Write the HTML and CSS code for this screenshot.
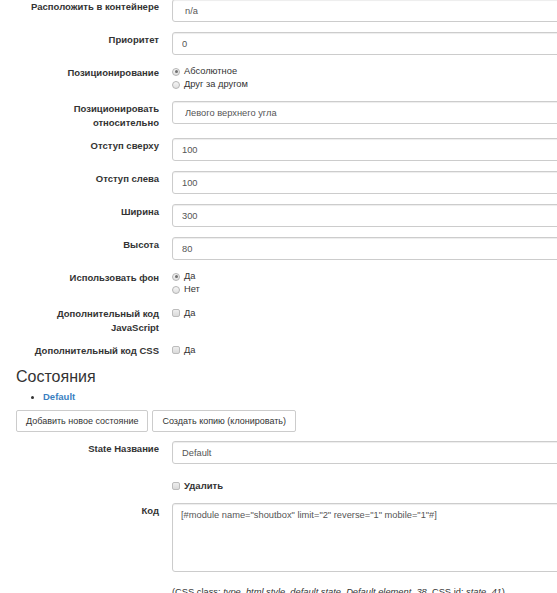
FILE: index.html
```html
<!DOCTYPE html>
<html lang="ru">
<head>
<meta charset="utf-8">
<title>Настройки элемента</title>
<link rel="stylesheet" href="styles.css">
</head>
<body>
<div class="page">
  <div class="form form-top">
    <div class="row">
      <div class="lbl">Расположить в контейнере</div>
      <div class="ctl"><input class="inp sel" type="text" value="n/a" readonly></div>
    </div>
    <div class="row">
      <div class="lbl">Приоритет</div>
      <div class="ctl"><input class="inp" type="text" value="0" readonly></div>
    </div>
    <div class="row">
      <div class="lbl">Позиционирование</div>
      <div class="ctl opts">
        <div class="opt"><span class="radio on"></span><span>Абсолютное</span></div>
        <div class="opt"><span class="radio"></span><span>Друг за другом</span></div>
      </div>
    </div>
    <div class="row">
      <div class="lbl">Позиционировать относительно</div>
      <div class="ctl"><input class="inp sel" type="text" value="Левого верхнего угла" readonly></div>
    </div>
    <div class="row">
      <div class="lbl">Отступ сверху</div>
      <div class="ctl"><input class="inp" type="text" value="100" readonly></div>
    </div>
    <div class="row">
      <div class="lbl">Отступ слева</div>
      <div class="ctl"><input class="inp" type="text" value="100" readonly></div>
    </div>
    <div class="row">
      <div class="lbl">Ширина</div>
      <div class="ctl"><input class="inp" type="text" value="300" readonly></div>
    </div>
    <div class="row">
      <div class="lbl">Высота</div>
      <div class="ctl"><input class="inp" type="text" value="80" readonly></div>
    </div>
    <div class="row">
      <div class="lbl">Использовать фон</div>
      <div class="ctl opts">
        <div class="opt"><span class="radio on"></span><span>Да</span></div>
        <div class="opt"><span class="radio"></span><span>Нет</span></div>
      </div>
    </div>
    <div class="row">
      <div class="lbl">Дополнительный код JavaScript</div>
      <div class="ctl checks">
        <div class="opt"><span class="check"></span><span>Да</span></div>
      </div>
    </div>
    <div class="row">
      <div class="lbl">Дополнительный код CSS</div>
      <div class="ctl checks">
        <div class="opt"><span class="check"></span><span>Да</span></div>
      </div>
    </div>
  </div>

  <h2 class="title">Состояния</h2>
  <ul class="states">
    <li><a class="state-link" href="#">Default</a></li>
  </ul>
  <div class="btns">
    <button class="btn" type="button">Добавить новое состояние</button>
    <button class="btn" type="button">Создать копию (клонировать)</button>
  </div>

  <div class="form form-state">
    <div class="row">
      <div class="lbl">State Название</div>
      <div class="ctl"><input class="inp" type="text" value="Default" readonly></div>
    </div>
    <div class="row">
      <div class="lbl"></div>
      <div class="ctl checks delete">
        <div class="opt"><span class="check"></span><span class="bold">Удалить</span></div>
      </div>
    </div>
    <div class="row">
      <div class="lbl">Код</div>
      <div class="ctl"><textarea class="inp area" readonly>[#module name="shoutbox" limit="2" reverse="1" mobile="1"#]</textarea></div>
    </div>
    <div class="row">
      <div class="lbl"></div>
      <div class="ctl note">(CSS class: <em>type_html style_default state_Default element_38</em>, CSS id: <em>state_41</em>)</div>
    </div>
  </div>
</div>
</body>
</html>
```

FILE: styles.css
```css
html, body {
  margin: 0;
  padding: 0;
  overflow: hidden;
  background: #fff;
}

body {
  font-family: "Liberation Sans", Arial, sans-serif;
  font-size: 9.3px;
  color: #333;
}

.page {
  padding-left: 16px;
}

.form-top {
  margin-top: -1px;
}

.row {
  display: grid;
  grid-template-columns: 143px 420px;
  column-gap: 13px;
  margin-bottom: 10px;
  align-items: start;
}

.lbl {
  text-align: right;
  font-size: 9.5px;
  font-weight: bold;
  line-height: 14px;
  padding-top: 1px;
  margin-bottom: -2px;
}

.inp {
  box-sizing: border-box;
  display: block;
  margin: 0;
  width: 420px;
  height: 23px;
  padding: 0 9px;
  border: 1px solid #ccc;
  border-radius: 3px;
  box-shadow: inset 0 1px 1px rgba(0, 0, 0, 0.075);
  background: #fff;
  font: 9.3px "Liberation Sans", Arial, sans-serif;
  color: #555;
  outline: none;
}

.inp.sel {
  padding-left: 12px;
}

.area {
  height: 69px;
  padding: 4px 8px;
  line-height: 14px;
  resize: none;
  overflow: hidden;
}

.opts {
  line-height: 13px;
}

.checks {
  line-height: 14px;
}

.opt {
  display: flex;
  align-items: center;
  gap: 4px;
}

.radio {
  box-sizing: border-box;
  position: relative;
  width: 8px;
  height: 8px;
  border-radius: 50%;
  border: 1px solid #b4b4b4;
  background: linear-gradient(#f6f6f6, #e0e0e0);
}

.radio.on::after {
  content: "";
  position: absolute;
  left: 1.5px;
  top: 1.5px;
  width: 3px;
  height: 3px;
  border-radius: 50%;
  background: #707070;
}

.check {
  box-sizing: border-box;
  width: 8px;
  height: 8px;
  border-radius: 2px;
  border: 1px solid #bcbcbc;
  background: linear-gradient(#eeeeee, #dadada);
}

.delete {
  padding-top: 5px;
}

.bold {
  font-weight: bold;
  font-size: 9.5px;
}

.title {
  margin: 2px 0 0;
  font-size: 16px;
  line-height: 20px;
  font-weight: normal;
  color: #333;
}

.states {
  margin: 3px 0 0;
  padding-left: 27px;
  line-height: 14px;
}

.state-link {
  color: #3a7fc1;
  font-weight: bold;
  font-size: 9.5px;
  text-decoration: none;
}

.btns {
  display: flex;
  gap: 4px;
  margin-top: 6px;
  margin-bottom: 9px;
}

.btn {
  box-sizing: border-box;
  height: 22px;
  padding: 0 9px;
  margin: 0;
  border: 1px solid #ccc;
  border-radius: 2px;
  background: #fff;
  font: 9px "Liberation Sans", Arial, sans-serif;
  color: #333;
}

.note {
  padding-top: 3px;
  line-height: 14px;
  color: #333;
  white-space: nowrap;
}
```
